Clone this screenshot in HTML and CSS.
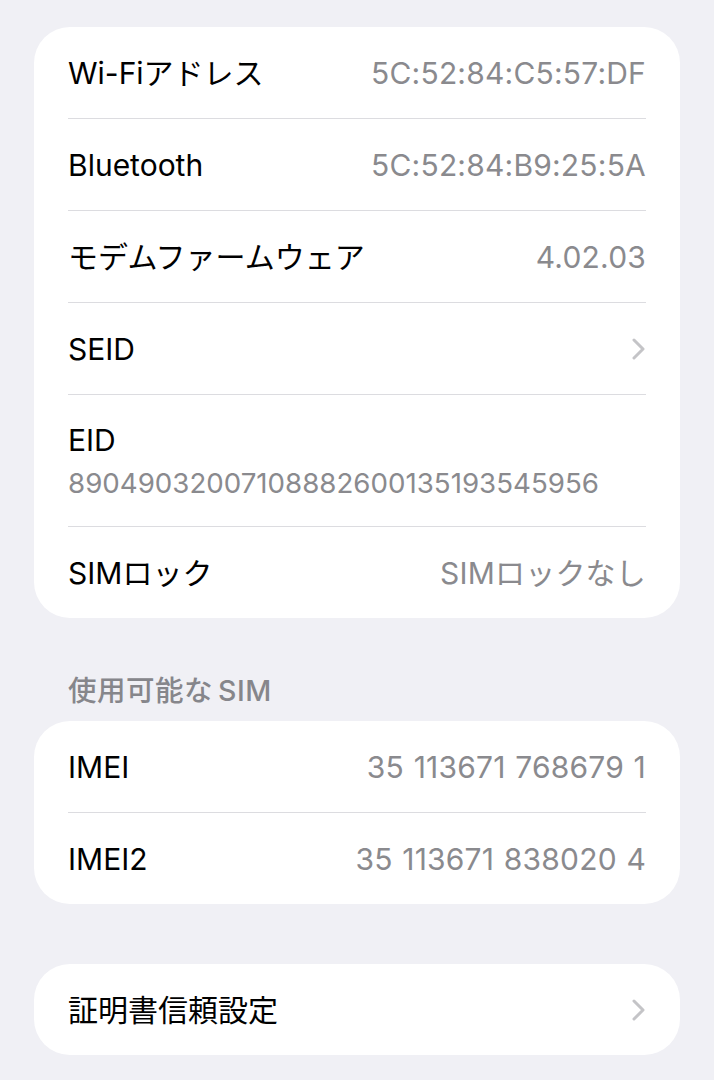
FILE: index.html
```html
<!DOCTYPE html>
<html lang="ja">
<head>
<meta charset="utf-8">
<link rel="stylesheet" href="styles.css">
</head>
<body>
<main class="page">
  <section class="card">
    <div class="row"><div class="row-in"><span class="label">Wi-Fiアドレス</span><span class="value">5C:52:84:C5:57:DF</span></div></div>
    <div class="row"><div class="row-in"><span class="label">Bluetooth</span><span class="value">5C:52:84:B9:25:5A</span></div></div>
    <div class="row"><div class="row-in"><span class="label">モデムファームウェア</span><span class="value">4.02.03</span></div></div>
    <div class="row"><div class="row-in"><span class="label">SEID</span>
      <svg class="chev" width="13" height="22" viewBox="0 0 13 22"><polyline points="2,2 11,11 2,20" fill="none" stroke="#c4c4c7" stroke-width="3" stroke-linecap="round" stroke-linejoin="round"/></svg>
    </div></div>
    <div class="row"><div class="row-in tall"><span class="label">EID</span><span class="sub">89049032007108882600135193545956</span></div></div>
    <div class="row"><div class="row-in"><span class="label">SIMロック</span><span class="value">SIMロックなし</span></div></div>
  </section>

  <h2 class="header">使用可能な<span class="header-latin">SIM</span></h2>
  <section class="card">
    <div class="row"><div class="row-in"><span class="label">IMEI</span><span class="value num">35 113671 768679 1</span></div></div>
    <div class="row"><div class="row-in"><span class="label">IMEI2</span><span class="value num">35 113671 838020 4</span></div></div>
  </section>

  <section class="card card-last">
    <div class="row"><div class="row-in"><span class="label">証明書信頼設定</span>
      <svg class="chev" width="13" height="22" viewBox="0 0 13 22"><polyline points="2,2 11,11 2,20" fill="none" stroke="#c4c4c7" stroke-width="3" stroke-linecap="round" stroke-linejoin="round"/></svg>
    </div></div>
  </section>
</main>
</body>
</html>
```
FILE: styles.css
```css
html, body {
  margin: 0;
  padding: 0;
  background: #f0f0f5;
}
body {
  font-family: "Inter", "Noto Sans CJK JP", sans-serif;
  color: #000;
  -webkit-font-smoothing: antialiased;
}
.page {
  padding: 27px 34px 0 34px;
}
.card {
  background: #fff;
  border-radius: 36px;
  overflow: hidden;
}
.row {
  padding: 0 34px;
}
.row-in {
  height: 91px;
  border-bottom: 1px solid #dcdce0;
  display: flex;
  align-items: center;
  justify-content: space-between;
}
.row:last-child .row-in {
  border-bottom: none;
}
.row-in.tall {
  height: 131px;
  flex-direction: column;
  align-items: flex-start;
  justify-content: center;
  gap: 9px;
}
.label {
  font-size: 30px;
  line-height: 36px;
}
.value {
  font-size: 30px;
  line-height: 36px;
  color: #8a8a8e;
  letter-spacing: 0.2px;
}
.value.num {
  word-spacing: 1px;
}
.sub {
  font-size: 27.7px;
  line-height: 32px;
  color: #8a8a8e;
}
.chev {
  display: block;
  margin-right: 1px;
}
.header {
  margin: 56px 0 13px 34px;
  font-size: 28.5px;
  line-height: 34px;
  font-weight: 500;
  color: #86868b;
  letter-spacing: 0.5px;
}
.header-latin {
  margin-left: 5px;
}
.card-last {
  margin-top: 60px;
}
```
